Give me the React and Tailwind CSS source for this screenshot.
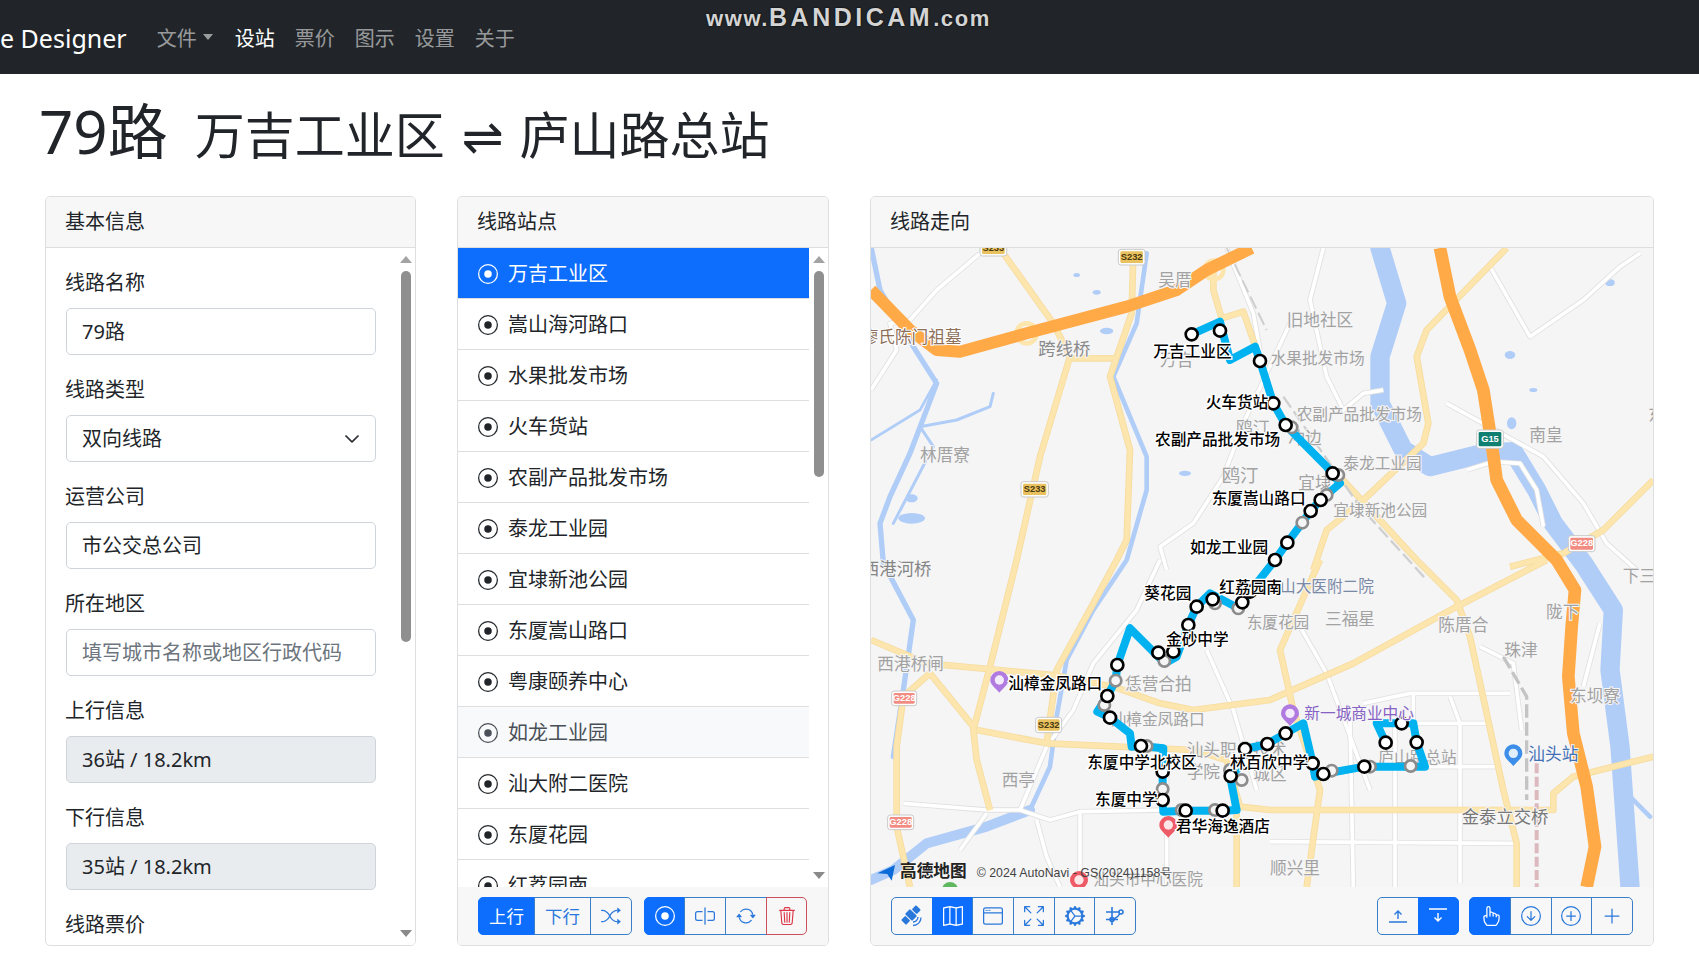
import {
  BsRecordCircle, BsShuffle, BsInputCursor, BsArrowRepeat, BsTrash3, BsMap, BsWindow,
  BsArrowsFullscreen, BsGearWideConnected, BsHandIndex, BsArrowDownCircle, BsPlusCircle,
  BsPlusLg, BsChevronDown,
} from "react-icons/bs";

const stops = ["万吉工业区", "嵩山海河路口", "水果批发市场", "火车货站", "农副产品批发市场", "泰龙工业园", "宜埭新池公园", "东厦嵩山路口", "粤康颐养中心", "如龙工业园", "汕大附二医院", "东厦花园", "红荔园南"];

const fields = [
  { label: "线路名称", value: "79路" },
  { label: "线路类型", value: "双向线路", select: true },
  { label: "运营公司", value: "市公交总公司" },
  { label: "所在地区", placeholder: "填写城市名称或地区行政代码" },
  { label: "上行信息", value: "36站 / 18.2km", disabled: true },
  { label: "下行信息", value: "35站 / 18.2km", disabled: true },
];

function Scrollbar({ thumb }) {
  return (
    <div className="w-[19px] shrink-0 flex flex-col items-center pt-2 pb-2 bg-white">
      <div className="w-0 h-0 border-x-[6.5px] border-x-transparent border-b-[7px] border-b-[#a3a3a3]" />
      <div className={`w-[10px] mt-2 rounded-full bg-[#8f8f8f] ${thumb}`} />
      <div className="w-0 h-0 mt-auto border-x-[6.5px] border-x-transparent border-t-[7px] border-t-[#8a8a8a]" />
    </div>
  );
}

function Card({ title, className, children }) {
  return (
    <section className={`flex flex-col overflow-hidden rounded-[5px] border border-[#dedede] bg-white ${className}`}>
      <h2 className="h-[51px] shrink-0 border-b border-[#dedede] bg-[#f7f7f7] px-[19px] text-[20px] leading-[50px] text-[#212529]">{title}</h2>
      {children}
    </section>
  );
}

function Btn({ active, danger, wide, children }) {
  const tone = danger
    ? "border-[#c9505c] text-[#dc3545] z-10"
    : active
      ? "border-[#0d6efd] bg-[#0d6efd] text-white"
      : "border-[#3b7fc9] text-[#2a78dc]";
  return (
    <button className={`-ml-px first:ml-0 first:rounded-l-[5px] last:rounded-r-[5px] h-[38px] flex items-center justify-center border text-[17.5px] ${wide ? "w-[57px]" : "w-[41.7px]"} ${tone}`}>
      {children}
    </button>
  );
}

function SatelliteIcon() {
  return (
    <svg width="22" height="22" viewBox="0 0 22 22" fill="currentColor">
      <g transform="rotate(-45 10 10)">
        <rect x="-0.5" y="6.5" width="6" height="7" rx="1" />
        <rect x="6.5" y="5" width="7" height="10" rx="1" />
        <rect x="14.5" y="6.5" width="6" height="7" rx="1" />
      </g>
      <path d="M12 20.5a8 8 0 0 0 8-8M12 17a5 5 0 0 0 5-5" fill="none" stroke="currentColor" strokeWidth="1.3" />
    </svg>
  );
}

function BezierIcon() {
  return (
    <svg width="20" height="20" viewBox="0 0 20 20" fill="none" stroke="currentColor" strokeWidth="1.6">
      <path d="M1 6h13M1 13.5h12M7 1v18" />
      <path d="M15 7.5c-1.5 3-3 4-6 5.5" />
      <circle cx="16" cy="6" r="2" />
      <circle cx="7" cy="13.5" r="2" />
    </svg>
  );
}

function BarUpIcon() {
  return (
    <svg width="20" height="20" viewBox="0 0 20 20" fill="none" stroke="currentColor" strokeWidth="1.4">
      <path d="M1 16h18M10 13V5M6.5 8.5 10 5l3.5 3.5" />
    </svg>
  );
}

function BarDownIcon() {
  return (
    <svg width="20" height="20" viewBox="0 0 20 20" fill="none" stroke="currentColor" strokeWidth="1.4">
      <path d="M1 3h18M10 7v8M6.5 11.5 10 15l3.5-3.5" />
    </svg>
  );
}

const orange = [
  { w: 36, p: "33,300 150,420 230,480 300,485 500,430 800,350 950,300 1040,240 1175,174" },
  { w: 38, p: "1740,174 1770,320 1830,480 1870,600 1895,760 1910,870 1970,990 2090,1110 2145,1200 2135,1310 2125,1460 2140,1630 2180,1790 2205,1970 2180,2091" },
];

const yellow = [
  "430,190 580,400 630,500 540,800 470,1110 390,1430 340,1620 350,1710 390,1860",
  "820,190 815,370 750,560 810,780 800,1050 770,1110 700,1240 590,1440 560,1660",
  "630,505 770,505",
  "1060,220 1060,300 1085,385 1150,365 1190,480",
  "1360,1140 1400,1020 1510,930 1690,760 1705,700 1670,500 1700,420 1940,174",
  "1440,860 1670,1110 1790,1230 1830,1340 1930,1800 1970,1960 1970,2091",
  "1790,1250 2060,1110",
  "1790,1250 1480,1420 1230,1530 1000,1560 900,1540 760,1490 580,1455 200,1420 33,1350",
  "1380,1110 1260,1380 1300,1560 1380,1800 1340,2091",
  "1230,1860 2080,1860 2080,1810 2140,1760 2380,1700",
  "1950,1130 2110,1090 2230,1020 2380,870",
  "350,1620 560,1660 1000,1680 1100,1710 1140,1850 1230,1860",
  "1130,1860 1130,2091",
  "210,1450 130,1520 110,1670 110,1910 150,2091",
  "210,1450 340,1610",
];

const white = [
  "33,600 110,480 90,400 150,390 230,300 360,190",
  "1100,174 1180,370 1200,480",
  "1290,400 1150,700 1090,860 1000,1000 900,1070 920,1140",
  "1390,174 1350,330 1400,560 1450,660 1510,610 1570,600",
  "1760,640 1960,750 2050,800 2170,940 2240,1060 2330,1140",
  "1890,230 2010,440 2170,330 2280,230 2340,190",
  "1820,840 1900,815 1980,820 2030,900 2050,1010",
  "130,1840 380,1860 480,1860 570,1890 660,1865 920,1860 1130,1855",
  "660,1860 660,2091",
  "920,1670 920,2091",
  "480,1860 560,1670 640,1560 700,1420 830,1260 900,1110",
  "300,1980 380,1870",
  "530,1890 560,2000 600,2091",
  "1510,1540 1650,1510 1950,1510",
  "1550,1600 1890,1600",
  "1560,1730 1920,1730",
  "1660,1510 1660,1600",
  "1800,1600 1800,2080",
  "1605,1590 1605,2091",
  "1470,1590 1480,2091",
  "1770,1520 1800,1600",
  "1230,1955 1960,1960",
  "1860,1370 1960,1420 1985,1620",
  "1320,1310 1400,1450 1530,1800",
  "2170,1490 2220,1300",
  "1040,1380 1120,1560 1190,1800",
];

const water = [
  { w: 16, p: "33,170 60,300 160,470 230,580 150,790 90,920 60,1000 70,1120 160,1290 130,1500 100,1700" },
  { w: 14, p: "860,190 830,400 760,560 860,800 860,900 800,1110 700,1260 620,1410 590,1580 570,1730 510,1860" },
  { w: 30, p: "510,1860 380,1910 200,1960 100,2040 33,2070" },
  { w: 58, p: "1560,174 1610,340 1560,500 1560,640 1630,780 1710,830 1870,790 1960,785 2030,900 2080,1000 2170,1120 2260,1260 2250,1440 2280,1670 2310,2091" },
  { w: 14, p: "2280,1790 2370,1880" },
  { w: 8, p: "33,750 180,660 230,570" },
  { w: 9, p: "400,610 390,650 290,690 180,710 220,770 100,1000" },
];

const ponds = [[740, 423, 20, 10], [650, 255, 10, 6], [710, 307, 12, 7], [155, 925, 18, 12], [155, 985, 40, 16], [975, 850, 18, 8], [1950, 495, 16, 12], [2020, 600, 12, 6], [1955, 700, 14, 18], [2250, 278, 14, 10]];

const blackDots = [
  [995, 433], [1080, 422], [1200, 513], [1240, 640], [1277, 705], [1418, 850], [1382, 930], [1352, 963], [1282, 1058], [1245, 1110],
  [1170, 1205], [1147, 1237], [1058, 1228], [1010, 1250], [985, 1305], [940, 1385], [895, 1388], [772, 1425], [742, 1518], [750, 1583],
  [843, 1668], [908, 1745], [908, 1830], [977, 1862], [1088, 1862], [1112, 1758], [1153, 1718], [1155, 1677], [1222, 1662],
  [1277, 1630], [1358, 1720], [1390, 1752], [1513, 1730], [1577, 1658], [1625, 1600], [1670, 1657],
];

const grayDots = [
  [1295, 712], [1435, 855], [1400, 915], [1327, 998], [1135, 1255], [1065, 1240], [913, 1413], [767, 1472], [733, 1545], [860, 1668],
  [908, 1797], [965, 1860], [1065, 1860], [1110, 1740], [1145, 1770], [1415, 1742], [1530, 1730], [1652, 1728],
];

const route = "995,433 1080,395 1110,510 1185,470 1200,513 1240,640 1277,705 1330,760 1400,830 1440,880 1382,930 1352,963 1327,998 1282,1058 1245,1110 1170,1205 1147,1237 1135,1255 1050,1210 1010,1250 985,1305 950,1400 915,1420 810,1315 772,1425 767,1472 742,1518 712,1565 750,1583 810,1630 815,1670 843,1668 910,1675 908,1745 908,1830 910,1865 977,1862 1088,1862 1130,1860 1110,1758 1153,1718 1155,1677 1222,1662 1277,1630 1330,1600 1358,1720 1365,1760 1390,1752 1513,1730 1530,1730 1652,1730 1695,1730 1670,1657 1660,1600 1625,1600 1550,1600 1577,1658";

const grayLabels = [
  ["吴厝", 895, 275], ["万吉", 900, 515], ["鸥汀", 1128, 718], ["林厝寮", 180, 800], ["鸥汀", 1085, 860, 55], ["冲边", 1285, 748],
  ["旧地社区", 1280, 395], ["水果批发市场", 1232, 510, 47], ["农副产品批发市场", 1310, 678, 47], ["南皇", 2008, 738], ["泰龙工业园", 1450, 825, 47],
  ["宜埭", 1315, 882], ["宜埭新池公园", 1420, 965, 47], ["东", 2365, 680], ["西港桥闸", 52, 1427], ["西亭", 425, 1775], ["汕樟金凤路口", 752, 1592, 47],
  ["恁营合拍", 795, 1485], ["汕头职业技术", 980, 1685], ["学院", 980, 1750], ["城区", 1180, 1755], ["东厦花园", 1160, 1300, 47], ["三福星", 1395, 1290],
  ["陈厝合", 1735, 1310], ["珠津", 1933, 1383], ["陇下", 2058, 1270], ["下三", 2288, 1162], ["东坝寮", 2130, 1522], ["顺兴里", 1230, 2038],
  ["庐山路总站", 1555, 1705, 47], ["汕头市中心医院", 700, 2072, 47],
];

const blackLabels = [
  ["万吉工业区", 880, 487], ["火车货站", 1037, 640], ["农副产品批发市场", 885, 752], ["东厦嵩山路口", 1055, 930], ["如龙工业园", 990, 1075],
  ["葵花园", 853, 1215], ["红荔园南", 1078, 1195], ["金砂中学", 918, 1353], ["东厦中学北校区", 682, 1720],
  ["东厦中学", 705, 1832], ["林百欣中学", 1110, 1722],
];

function Shield({ x, y, w, h, text, fill, color = "#4a3a10" }) {
  return (
    <g>
      <rect x={x} y={y} width={w} height={h} rx="8" fill="#fff" stroke="#c9c9c9" strokeWidth="3" />
      <rect x={x + 6} y={y + 6} width={w - 12} height={h - 12} rx="4" fill={fill} />
      <text x={x + w / 2} y={y + h / 2 + 1} textAnchor="middle" dominantBaseline="middle" fontSize="28" fontWeight="700" fill={color} fontFamily="Liberation Sans, sans-serif">{text}</text>
    </g>
  );
}

function Pin({ x, y, fill }) {
  return (
    <g>
      <path d={`M${x - 27} ${y}a27 27 0 1 1 54 0c0 16-16 24-27 38c-11-14-27-22-27-38z`} fill={fill} />
      <circle cx={x} cy={y} r="14" fill="#fff" opacity="0.85" />
    </g>
  );
}

function RouteMap() {
  return (
    <svg viewBox="33 174 2346 1917" className="block w-full h-full" fontFamily="Noto Sans CJK SC, sans-serif">
      <rect x="33" y="174" width="2346" height="1917" fill="#f5f5f6" />
      {water.map((r, i) => (
        <polyline key={i} points={r.p} fill="none" stroke="#b0cdf8" strokeWidth={r.w} strokeLinejoin="round" strokeLinecap="round" />
      ))}
      {ponds.map(([x, y, a, b], i) => (
        <ellipse key={i} cx={x} cy={y} rx={a} ry={b} fill="#b0cdf8" />
      ))}
      {white.map((p, i) => (
        <polyline key={i} points={p} fill="none" stroke="#e0e0e0" strokeWidth="16" strokeLinejoin="round" />
      ))}
      {white.map((p, i) => (
        <polyline key={i} points={p} fill="none" stroke="#fff" strokeWidth="11" strokeLinejoin="round" />
      ))}
      {yellow.map((p, i) => (
        <polyline key={i} points={p} fill="none" stroke="#f6dc9f" strokeWidth="20" strokeLinejoin="round" />
      ))}
      {yellow.map((p, i) => (
        <polyline key={i} points={p} fill="none" stroke="#fde5ae" strokeWidth="15" strokeLinejoin="round" />
      ))}
      <circle cx="500" cy="430" r="30" fill="none" stroke="#fde5ae" strokeWidth="14" />
      <circle cx="1062" cy="240" r="28" fill="none" stroke="#fde5ae" strokeWidth="14" />
      <polyline points="1100,174 1220,420" fill="none" stroke="#cfcfcf" strokeWidth="6" strokeDasharray="40 14" />
      <polyline points="1270,620 1500,950 1700,1170" fill="none" stroke="#cfcfcf" strokeWidth="7" strokeDasharray="40 14" />
      <polyline points="1930,1400 2000,1520 2000,1830" fill="none" stroke="#c4c4c4" strokeWidth="10" strokeDasharray="40 14" />
      <polyline points="2030,1720 2030,2091" fill="none" stroke="#dbb9bf" strokeWidth="12" strokeDasharray="30 10" />
      {orange.map((r, i) => (
        <polyline key={i} points={r.p} fill="none" stroke="#ffa947" strokeWidth={r.w} strokeLinejoin="round" />
      ))}

      <Shield x={360} y={150} w={80} h={48} text="S233" fill="#e9c25f" />
      <Shield x={775} y={178} w={80} h={47} text="S232" fill="#e9c25f" />
      <Shield x={483} y={875} w={82} h={46} text="S233" fill="#e9c25f" />
      <Shield x={527} y={1582} w={78} h={46} text="S232" fill="#e9c25f" />
      <Shield x={95} y={1503} w={75} h={44} text="G228" fill="#f28b82" color="#fff" />
      <Shield x={83} y={1875} w={78} h={44} text="G228" fill="#f28b82" color="#fff" />
      <Shield x={2125} y={1037} w={80} h={48} text="G228" fill="#f28b82" color="#fff" />
      <Shield x={1850} y={720} w={80} h={55} text="G15" fill="#0f7f72" color="#fff" />

      {grayLabels.map(([t, x, y, s], i) => (
        <text key={i} x={x} y={y} dominantBaseline="middle" fontSize={s || 50} fill="#a2a2a2" stroke="#f5f5f6" strokeWidth="6" paintOrder="stroke">{t}</text>
      ))}
      <text x="5" y="445" dominantBaseline="middle" fontSize="50" fill="#8d6f5a" stroke="#fff" strokeWidth="6" paintOrder="stroke">廖氏陈门祖墓</text>
      <text x="535" y="482" dominantBaseline="middle" fontSize="52" fill="#8a8a8a" stroke="#f5f5f6" strokeWidth="6" paintOrder="stroke">跨线桥</text>
      <text x="6" y="1140" dominantBaseline="middle" fontSize="52" fill="#858585" stroke="#f5f5f6" strokeWidth="6" paintOrder="stroke">西港河桥</text>
      <text x="1805" y="1885" dominantBaseline="middle" fontSize="52" fill="#777" stroke="#f5f5f6" strokeWidth="6" paintOrder="stroke">金泰立交桥</text>
      <text x="1260" y="1192" dominantBaseline="middle" fontSize="47" fill="#7a8aa6" stroke="#f5f5f6" strokeWidth="6" paintOrder="stroke">山大医附二院</text>

      <polyline points={route} fill="none" stroke="#00b3f0" strokeWidth="24" strokeLinejoin="round" />

      {grayDots.map(([x, y], i) => (
        <circle key={i} cx={x} cy={y} r="17" fill="#f5f5f5" stroke="#8c8c8c" strokeWidth="8" />
      ))}
      {blackDots.map(([x, y], i) => (
        <circle key={i} cx={x} cy={y} r="18" fill="#fff" stroke="#000" strokeWidth="8" />
      ))}
      {blackLabels.map(([t, x, y], i) => (
        <text key={i} x={x} y={y} dominantBaseline="middle" fontSize="47" fontWeight="500" fill="#000" stroke="#fff" strokeWidth="8" paintOrder="stroke">{t}</text>
      ))}

      <Pin x={418} y={1470} fill="#b07ae0" />
      <Pin x={1290} y={1570} fill="#b07ae0" />
      <Pin x={1960} y={1690} fill="#3d8ee8" />
      <Pin x={925} y={1905} fill="#ee5a66" />
      <Pin x={657} y={2070} fill="#ee5a66" />
      <circle cx="270" cy="2100" r="24" fill="#5fb85f" />
      <text x="1333" y="1575" dominantBaseline="middle" fontSize="47" fill="#8562c4" stroke="#f5f5f6" strokeWidth="6" paintOrder="stroke">新一城商业中心</text>
      <text x="2005" y="1697" dominantBaseline="middle" fontSize="50" fill="#3f6fb5" stroke="#f5f5f6" strokeWidth="6" paintOrder="stroke">汕头站</text>
      <text x="445" y="1485" dominantBaseline="middle" fontSize="47" fontWeight="500" fill="#000" stroke="#fff" strokeWidth="8" paintOrder="stroke">汕樟金凤路口</text>
      <text x="948" y="1913" dominantBaseline="middle" fontSize="47" fontWeight="500" fill="#000" stroke="#fff" strokeWidth="8" paintOrder="stroke">君华海逸酒店</text>

      <path d="M52 2050 105 2025 95 2072 82 2052z" fill="#0b6bd8" />
      <text x="120" y="2048" dominantBaseline="middle" fontSize="50" fontWeight="700" fill="#222">高德地图</text>
      <text x="350" y="2052" dominantBaseline="middle" fontSize="37" fill="#444" fontFamily="Liberation Sans, sans-serif">© 2024 AutoNavi - GS(2024)1158号</text>
    </svg>
  );
}

export default function App() {
  return (
    <div className="h-screen overflow-hidden bg-white text-[20px] leading-[30px] text-[#212529] font-['Noto_Sans','Noto_Sans_CJK_SC',sans-serif]">
      <nav className="relative h-[74px] flex items-center bg-[#212529] text-[20px]">
        <span className="pt-px text-[25px] text-white pr-[30px]">e Designer</span>
        <div className="flex gap-5 pt-[3px] text-[#ffffff8c]">
          <span className="flex items-center pr-[2px]">
            文件
            <span className="ml-[6px] -mt-1 w-0 h-0 border-x-[5.5px] border-x-transparent border-t-[6.5px] border-t-[#ffffff8c]" />
          </span>
          <span className="text-white">设站</span>
          <span>票价</span>
          <span>图示</span>
          <span>设置</span>
          <span>关于</span>
        </div>
        <span className="absolute left-[706px] top-[2px] text-[#d4d4d4] font-['Liberation_Sans',sans-serif] text-[22px] font-bold tracking-[1.6px] [text-shadow:0_0_2px_#000]">
          www.<span className="text-[25px] tracking-[3.5px]">BANDICAM</span>.com
        </span>
      </nav>

      <h1 className="h-[122px] pl-[39px] pt-[21px] text-[60px] leading-[72px] font-normal text-[#212529]">
        79路
        <span className="ml-[27px] text-[50px]">
          万吉工业区
          <span className="ml-[17px] mr-[16px] font-['DejaVu_Sans',sans-serif] text-[50px]">⇌</span>
          庐山路总站
        </span>
      </h1>

      <div className="flex gap-[41px] h-[750px] pl-[45px]">
        <Card title="基本信息" className="w-[371px]">
          <div className="flex-1 min-h-0 flex overflow-hidden">
            <div className="flex-1 min-w-0 overflow-hidden pt-5 pl-5 pr-5">
              {fields.map((f) => (
                <div key={f.label} className="mb-5">
                  <div className="mb-[10px] -ml-px">{f.label}</div>
                  <div className={`h-[47px] flex items-center justify-between rounded-[5px] border border-[#ced4da] px-[15px] ${f.disabled ? "bg-[#e9ecef]" : "bg-white"} ${f.placeholder ? "text-[#6c757d]" : "text-[#212529]"}`}>
                    {f.value || f.placeholder}
                    {f.select && <BsChevronDown className="text-[16px] stroke-[0.8]" />}
                  </div>
                </div>
              ))}
              <div className="-ml-px">线路票价</div>
            </div>
            <Scrollbar thumb="h-[371px]" />
          </div>
        </Card>

        <Card title="线路站点" className="w-[372px]">
          <div className="flex-1 min-h-0 flex overflow-hidden">
            <ul className="flex-1 min-w-0 overflow-hidden">
              {stops.map((s, i) => (
                <li key={s} className={`h-[51px] flex items-center gap-[10px] border-b border-[#dedede] px-5 pt-[2px] ${i === 0 ? "bg-[#0d6efd] text-white" : i === 9 ? "bg-[#f8f9fa] text-[#495057]" : ""}`}>
                  <BsRecordCircle className="text-[20px] shrink-0" />
                  {s}
                </li>
              ))}
            </ul>
            <Scrollbar thumb="h-[206px]" />
          </div>
          <footer className="h-[58px] shrink-0 flex gap-3 bg-[#f7f7f7] pl-5 pt-[10px]">
            <div className="flex">
              <Btn active wide>上行</Btn>
              <Btn wide>下行</Btn>
              <Btn><BsShuffle className="text-[20px]" /></Btn>
            </div>
            <div className="flex">
              <Btn active><BsRecordCircle className="text-[20px]" /></Btn>
              <Btn><BsInputCursor className="text-[20px]" /></Btn>
              <Btn><BsArrowRepeat className="text-[20px]" /></Btn>
              <Btn danger><BsTrash3 className="text-[18px]" /></Btn>
            </div>
          </footer>
        </Card>

        <Card title="线路走向" className="w-[784px]">
          <div className="flex-1 min-h-0">
            <RouteMap />
          </div>
          <footer className="h-[58px] shrink-0 flex justify-between bg-[#f7f7f7] px-5 pt-[10px]">
            <div className="flex">
              <Btn><SatelliteIcon /></Btn>
              <Btn active><BsMap className="text-[20px]" /></Btn>
              <Btn><BsWindow className="text-[20px]" /></Btn>
              <Btn><BsArrowsFullscreen className="text-[20px]" /></Btn>
              <Btn><BsGearWideConnected className="text-[20px]" /></Btn>
              <Btn><BezierIcon /></Btn>
            </div>
            <div className="flex gap-[10px]">
              <div className="flex">
                <Btn><BarUpIcon /></Btn>
                <Btn active><BarDownIcon /></Btn>
              </div>
              <div className="flex">
                <Btn active><BsHandIndex className="text-[20px]" /></Btn>
                <Btn><BsArrowDownCircle className="text-[20px]" /></Btn>
                <Btn><BsPlusCircle className="text-[20px]" /></Btn>
                <Btn><BsPlusLg className="text-[20px]" /></Btn>
              </div>
            </div>
          </footer>
        </Card>
      </div>
    </div>
  );
}
